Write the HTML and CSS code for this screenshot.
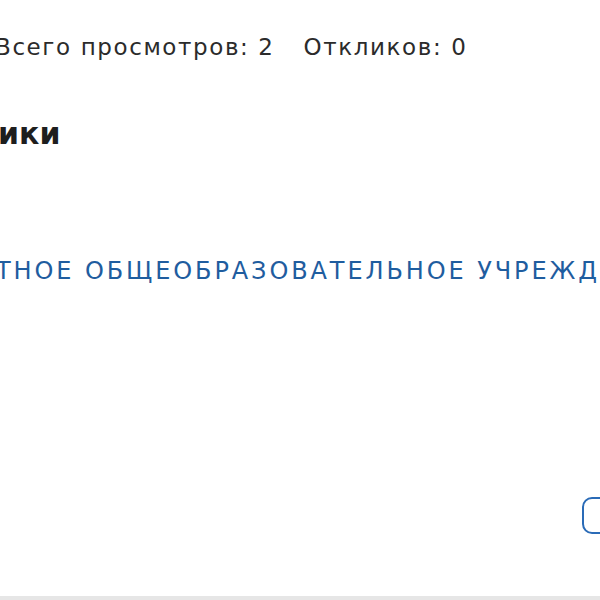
FILE: index.html
```html
<!DOCTYPE html>
<html lang="ru">
<head>
<meta charset="utf-8">
<link rel="stylesheet" href="styles.css">
</head>
<body>
<div class="page">
  <div class="stats">
    <span class="stat stat-views">Всего просмотров: 2</span>
    <span class="stat">Откликов: 0</span>
  </div>
  <h2 class="title">ики</h2>
  <a class="org" href="#">ТНОЕ ОБЩЕОБРАЗОВАТЕЛЬНОЕ УЧРЕЖДЕНИЕ</a>
  <div class="actions">
    <button class="btn" type="button"></button>
  </div>
  <div class="divider"></div>
</div>
</body>
</html>
```
FILE: styles.css
```css
html, body {
  margin: 0;
  padding: 0;
  background: #ffffff;
  overflow: hidden;
}
.page {
  width: 600px;
  height: 600px;
  display: flex;
  flex-direction: column;
  font-family: "DejaVu Sans", "Noto Sans", sans-serif;
  color: #2b2b2b;
  overflow: hidden;
}
.stats {
  margin-top: 32px;
  display: flex;
  gap: 29px;
  white-space: nowrap;
  font-size: 23px;
  line-height: 30px;
  letter-spacing: 1.6px;
  margin-left: -5px;
}
.title {
  margin: 52px 0 0 -2px;
  font-size: 30px;
  line-height: 40px;
  font-weight: 700;
  color: #1e1e1e;
}
.org {
  margin-top: 101px;
  margin-left: -4px;
  display: block;
  white-space: nowrap;
  font-size: 24px;
  line-height: 32px;
  letter-spacing: 2.9px;
  color: #1f5d9f;
  text-decoration: none;
}
.actions {
  margin-top: 210px;
  display: flex;
  justify-content: flex-end;
  margin-right: -100px;
}
.btn {
  width: 118px;
  height: 37px;
  border: 2px solid #2a6bb7;
  border-radius: 10px;
  background: #ffffff;
}
.divider {
  margin-top: auto;
  height: 4px;
  background: #e6e6e6;
}
```
